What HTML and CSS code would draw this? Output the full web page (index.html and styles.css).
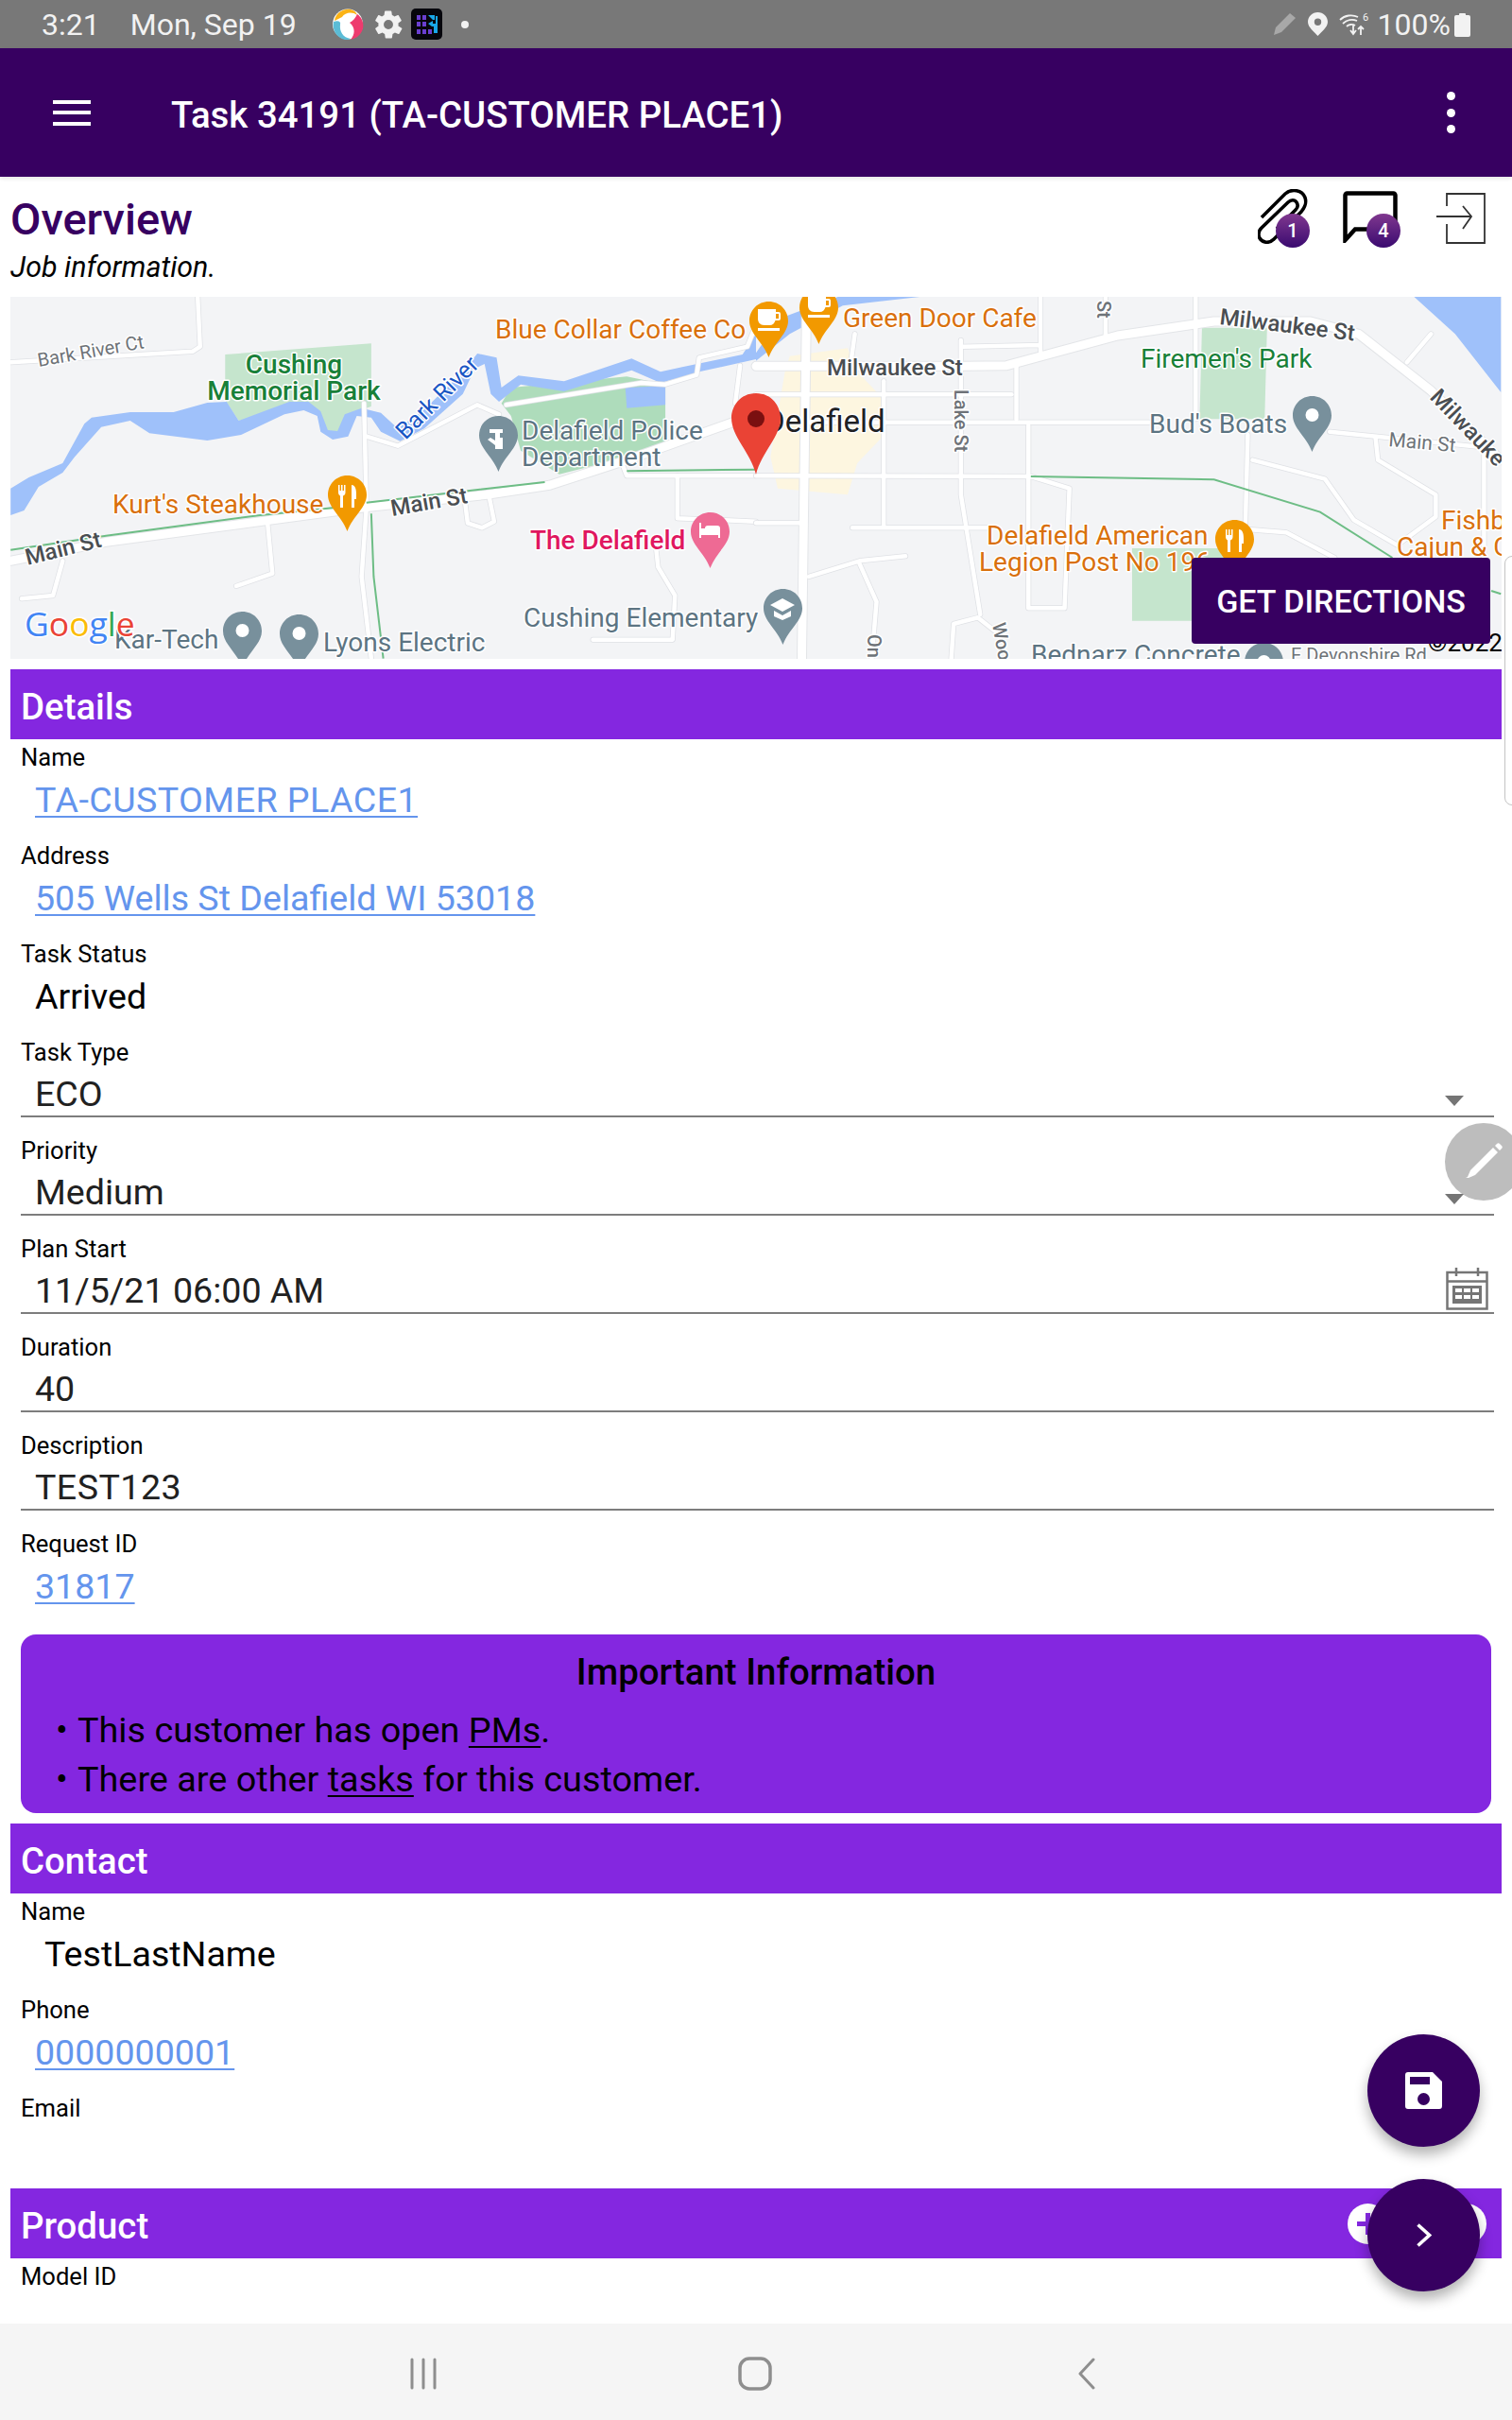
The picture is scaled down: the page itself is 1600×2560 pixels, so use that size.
FILE: index.html
```html
<!DOCTYPE html>
<html lang="en">
<head>
<meta charset="utf-8">
<title>Task 34191</title>
<link rel="stylesheet" href="styles.css">
</head>
<body>
<div class="screen">
  <div class="statusbar">
    <span class="st-time">3:21</span>
    <span class="st-date">Mon, Sep 19</span>
    <svg class="st-app1" viewBox="0 0 34 33"><circle cx="17" cy="16.500" r="16" fill="#fff"/><path d="M3 13C4 5 12 0 20 1C24 2 26 4 27 7C22 3 14 4 11 9Z" fill="#fbb316"/><path d="M27 6C33 10 35 18 32 24C29 30 24 32 20 33C25 27 25 20 19 15C23 13 25 10 27 6Z" fill="#ee3b6e"/><path d="M2 14C0 22 5 31 14 33C17 33 19 33 20 32C12 31 8 24 9 17C10 14 7 12 2 14Z" fill="#5bbcd6"/></svg>
    <svg class="st-gear" viewBox="0 0 24 24"><path fill="#f2f2f2" d="M19.400 13c.04-.330.06-.660.06-1s-.02-.670-.07-1l2.160-1.690c.19-.150.250-.420.120-.640l-2.050-3.550c-.120-.220-.390-.300-.620-.220l-2.550 1.030c-.530-.410-1.100-.750-1.730-1l-.390-2.710c-.03-.250-.250-.430-.500-.430h-4.100c-.250 0-.470.180-.500.430l-.390 2.710c-.620.250-1.200.600-1.730 1L4.990 4.900c-.230-.080-.500 0-.620.220L2.320 8.670c-.130.220-.070.490.120.640L4.600 11c-.040.330-.070.670-.070 1s.03.670.07 1l-2.160 1.690c-.19.150-.250.420-.120.640l2.050 3.550c.120.220.390.300.620.220l2.550-1.030c.530.410 1.100.750 1.730 1l.39 2.710c.03.250.250.430.500.430h4.100c.250 0 .470-.180.500-.430l.39-2.710c.620-.250 1.200-.600 1.730-1l2.550 1.030c.230.080.500 0 .620-.220l2.050-3.550c.130-.220.070-.490-.120-.640L19.400 13zM12 15.500a3.500 3.500 0 1 1 0-7 3.500 3.500 0 0 1 0 7z"/></svg>
    <svg class="st-app2" viewBox="0 0 33 33"><rect width="33" height="33" rx="5" fill="#06060c"/><g fill="#6a3fd0"><rect x="6" y="7" width="4" height="5"/><rect x="12" y="7" width="4" height="5"/><rect x="6" y="14" width="4" height="5"/><rect x="12" y="14" width="4" height="5"/><rect x="6" y="22" width="4" height="5"/><rect x="12" y="22" width="4" height="5"/><rect x="18" y="22" width="4" height="5"/></g><path d="M18 7h7v5h-2zM18 16l5-3v3h3v-8h2v18h-4v-7h-2z" fill="#19a7e8"/></svg>
    <span class="st-dot"></span>
    <span class="st-spacer"></span>
    <svg class="st-pen" viewBox="0 0 26 25"><path d="M1 24l2-8L18 1l6 5L9 21z" fill="#a8a8a8"/></svg>
    <svg class="st-loc" viewBox="0 0 21 25"><path fill-rule="evenodd" d="M10.500 0C4.700 0 0 4.500 0 10.300 0 16 7 21 10.500 25 14 21 21 16 21 10.300 21 4.500 16.300 0 10.500 0zm0 6.500a3.700 3.700 0 1 1 0 7.400 3.700 3.700 0 0 1 0-7.400z" fill="#f2f2f2"/></svg>
    <svg class="st-wifi" viewBox="0 0 32 25" fill="none" stroke="#f2f2f2" stroke-width="1.800"><path d="M1 8C6 3 14 2 20 5"/><path d="M4 12C8 8 14 7 19 9"/><path d="M8 15C10 13 14 12 17 14"/><path d="M15 14v8M12 19l3 4 3-4M23 24v-9M20 18l3-3 3 3"/><text class="st-six" x="25" y="9">6</text></svg>
    <span class="st-pct">100%</span>
    <svg class="st-batt" viewBox="0 0 17 26"><path d="M5 2a1 1 0 0 1 1-1h5a1 1 0 0 1 1 1v1h3a2 2 0 0 1 2 2v19a2 2 0 0 1-2 2H2a2 2 0 0 1-2-2V5a2 2 0 0 1 2-2h3z" fill="#f2f2f2"/></svg>
  </div>

  <header class="appbar">
    <div class="hamburger"><i></i><i></i><i></i></div>
    <h1 class="appbar-title">Task 34191 (TA-CUSTOMER PLACE1)</h1>
    <div class="kebab"><i></i><i></i><i></i></div>
  </header>

  <main class="content">
    <div class="overview">
      <div class="overview-text">
        <h2 class="overview-title">Overview</h2>
        <p class="overview-sub">Job information.</p>
      </div>
      <div class="overview-icons">
        <div class="ov-icon ov-clip">
          <svg viewBox="0 0 53 58" width="53" height="58" fill="none" stroke="#000" stroke-width="3.600"><path d="M4 30L29 5C36-1 47 1 50 9C52 15 50 19 46 24L17 53C12 58 5 57 2 52C0 48 1 44 4 41L32 14C35 11 39 11 41 14C43 17 42 20 40 22L20 42"/></svg>
          <span class="badge">1</span>
        </div>
        <div class="ov-icon ov-chat">
          <svg viewBox="0 0 58 55" width="58" height="55" fill="none" stroke="#000" stroke-width="4.500"><path d="M2.500 52V4.500a2 2 0 0 1 2-2h49a2 2 0 0 1 2 2v34a2 2 0 0 1-2 2H13z"/></svg>
          <span class="badge">4</span>
        </div>
        <div class="ov-icon ov-login">
          <svg viewBox="0 0 52 54" width="52" height="54" fill="none" stroke="#333" stroke-width="1.800"><path d="M11 14V1h40v52H11V33"/><path d="M0 25h36M28 14l9 11-9 13"/></svg>
        </div>
      </div>
    </div>

    <div class="map">
      <svg class="map-svg" viewBox="11 314 1578 383" width="1578" height="383">
        <defs>
          <symbol id="pin" viewBox="0 0 41 59"><path d="M20.500 0C9 0 0 9 0 20.500C0 34 14 42 20.500 59C27 42 41 34 41 20.500C41 9 32 0 20.500 0Z"/></symbol>
          <symbol id="pin-dot" viewBox="0 0 41 59"><path d="M20.500 0C9 0 0 9 0 20.500C0 34 14 42 20.500 59C27 42 41 34 41 20.500C41 9 32 0 20.500 0Z"/><circle cx="20.500" cy="20" r="7" fill="#fff"/></symbol>
          <symbol id="pin-food" viewBox="0 0 41 59"><path d="M20.500 0C9 0 0 9 0 20.500C0 34 14 42 20.500 59C27 42 41 34 41 20.500C41 9 32 0 20.500 0Z"/><path fill="#fff" d="M11 10h1.500v6h1.500v-6h1.500v6h1.500v-6h1.500v8c0 2-1 3-2.500 3.500V34h-3V21.500C12 21 11 20 11 18zM25 10c3 0 5 3 5 9v6h-2v9h-3z"/></symbol>
          <symbol id="pin-cup" viewBox="0 0 41 59"><path d="M20.500 0C9 0 0 9 0 20.500C0 34 14 42 20.500 59C27 42 41 34 41 20.500C41 9 32 0 20.500 0Z"/><path fill="#fff" d="M9 8h19v3h3a2 2 0 0 1 2 2v5a2 2 0 0 1-2 2h-3.500c-1 3-3 5-6 5h-6c-4 0-6.500-3-6.500-7zM28 13v5h3v-5zM9 28h23v3H9z"/></symbol>
          <g id="roads-left" class="rp">
            <path d="M22 220L400 185L415 170L410 12"/>
            <path d="M1050 355L1330 285L1380 290L1445 260L1450 205L1550 170L1568 100"/>
            <path d="M760 455L825 485L990 355L1035 385"/>
            <path d="M755 350L760 680L750 900L770 1160"/>
            <path d="M130 850L110 960L45 970"/>
            <path d="M555 730L565 890L490 930"/>
            <path d="M965 670L970 730L1000 745L1025 725L1015 650"/>
            <path d="M1290 540L1300 580L1568 580"/>
            <path d="M1405 580L1405 715L1568 725"/>
            <path d="M1360 800L1365 870L1400 960L1395 1100L1230 1100"/>
            <path d="M1535 230L1525 350"/>
          </g>
          <g id="roads-right" class="rp">
            <path d="M0 410H815M1190 440L1510 490"/>
            <path d="M0 322H530"/>
            <path d="M0 580L570 582L650 620L640 1000L565 1000L565 420"/>
            <path d="M0 730H90"/>
            <path d="M200 745L480 745M1020 750L1100 760L1200 840"/>
            <path d="M265 280V740"/>
            <path d="M425 150V640L465 1020"/>
            <path d="M540 235V400"/>
            <path d="M1020 450L1015 740"/>
            <path d="M1030 530L1180 590L1240 720L1330 800L1410 710L1410 640L1290 530L1285 460"/>
            <path d="M912 12V400M725 12V140M590 12V185M430 170L590 165M1510 490V840"/>
            <path d="M110 900L215 850L310 835M215 860L250 980L240 1160"/>
            <path d="M405 1160L410 1050L460 1030L510 1090"/>
            <path d="M1350 220L1400 130M205 130L195 240"/>
          </g>
          <g id="major-left" class="rp"><path d="M22 850L220 790L540 725L760 680L1010 640L1140 610L1300 530L1520 410"/></g>
          <g id="major-right" class="rp"><path d="M0 232H430L520 230L750 135L950 90L1150 90L1250 130L1400 310L1545 530"/><path d="M105 12L95 1160"/></g>
        </defs>
        <rect class="map-bg" x="11" y="314" width="1578" height="383"/>

        <g transform="translate(0 310) scale(.5102 .3333)">
          <path class="park" d="M467 195L770 160V360L740 375L715 440L690 460L665 430L660 385L630 370L560 390L495 405L467 340Z"/>
          <path class="park-dark" d="M1040 350L1060 300L1300 265L1380 290V490L1160 575L1080 500L1060 390Z"/>
          <path class="water" d="M22 620L60 585L130 540L175 415L190 395L270 378L360 378L430 348L470 345L495 405L600 345L640 345L665 375L680 435L700 438L715 385L750 365L790 380L825 430L880 370L960 250L990 192L1030 205L1040 300L1075 262L1170 280L1310 208L1370 250L1415 235L1540 195L1568 130V210L1450 250L1420 265L1370 285L1310 245L1170 312L1080 290L1035 345L1018 320L1005 225L985 240L960 320L880 430L830 470L790 440L770 395L740 390L722 455L690 465L665 440L658 390L630 372L590 385L500 450L430 468L310 445L270 405L210 425L155 520L130 570L80 615L50 690L22 705Z"/>
          <path class="water" d="M1297 300L1380 295V355L1300 365Z"/>
          <use href="#roads-left" class="road-case"/><use href="#major-left" class="major-case"/>
          <use href="#roads-left" class="road"/><use href="#major-left" class="major"/>
          <path class="trail" d="M22 815L220 770L540 705L700 680M760 665L1130 600M770 700L775 900L795 1160M1300 565L1568 560"/>
        </g>
        <g transform="translate(800 310) scale(.5102 .3333)">
          <path class="cream" d="M60 250L70 200L190 175L210 250L260 330V460L210 540L190 640L45 620L30 520Z"/>
          <path class="park" d="M925 110H1060L1055 400H920Z"/>
          <path class="park" d="M780 810H1000V1040H780Z"/>
          <path class="water" d="M1365 12H1545V315L1450 130Z"/>
          <path class="water" d="M0 190L50 80L170 12H340L180 40L70 130L0 215Z"/>
          <use href="#roads-right" class="road-case"/><use href="#major-right" class="major-case"/>
          <use href="#roads-right" class="road"/><use href="#major-right" class="major"/>
          <path class="trail" d="M570 582L950 592L1170 695L1320 840M1525 945L1545 955"/>
        </g>

        <text class="t t-gray t20" x="41" y="388" transform="rotate(-10 41 388)">Bark River Ct</text>
        <text class="t t-orange t28" x="524" y="358">Blue Collar Coffee Co</text>
        <text class="t t-green t28 tm tc" x="311" y="395">Cushing</text>
        <text class="t t-green t28 tm tc" x="311" y="423">Memorial Park</text>
        <text class="t t-blue t25" x="429" y="466" transform="rotate(-45 429 466)">Bark River</text>
        <text class="t t-slate t28" x="552" y="465">Delafield Police</text>
        <text class="t t-slate t28" x="552" y="493">Department</text>
        <text class="t t-orange t28" x="119" y="543">Kurt's Steakhouse</text>
        <text class="t t-road t24 tm" x="29" y="598" transform="rotate(-14 29 598)">Main St</text>
        <text class="t t-road t24 tm" x="415" y="546" transform="rotate(-10 415 546)">Main St</text>
        <text class="t t-pink t28 tm" x="561" y="581">The Delafield</text>
        <text class="t t-slate t28" x="554" y="663">Cushing Elementary</text>
        <text class="t t-slate t28" x="121" y="686">Kar-Tech</text>
        <text class="t t-slate t28" x="342" y="689">Lyons Electric</text>
        <text class="t t-orange t28" x="892" y="346">Green Door Cafe</text>
        <text class="t t-road t24 tm" x="875" y="397">Milwaukee St</text>
        <text class="t t-road t24 tm" x="1290" y="343" transform="rotate(7 1290 343)">Milwaukee St</text>
        <text class="t t-dark t33" x="809" y="457">Delafield</text>
        <text class="t t-gray t20 tm" x="1010" y="412" transform="rotate(90 1010 412)">Lake St</text>
        <text class="t t-gray t20 tm" x="1161" y="318" transform="rotate(90 1161 318)">St</text>
        <text class="t t-road t24 tm" x="1512" y="421" transform="rotate(46 1512 421)">Milwauke</text>
        <text class="t t-green t28" x="1207" y="389">Firemen's Park</text>
        <text class="t t-slate t28" x="1216" y="458">Bud's Boats</text>
        <text class="t t-gray t21" x="1469" y="472" transform="rotate(5 1469 472)">Main St</text>
        <text class="t t-orange t28" x="1525" y="560">Fishb</text>
        <text class="t t-orange t28" x="1478" y="588">Cajun &amp; C</text>
        <text class="t t-orange t28" x="1044" y="576">Delafield American</text>
        <text class="t t-orange t28" x="1036" y="604">Legion Post No 196</text>
        <text class="t t-gray t20 tm" x="918" y="671" transform="rotate(90 918 671)">On</text>
        <text class="t t-gray t20 tm" x="1050" y="660" transform="rotate(80 1050 660)">Woo</text>
        <text class="t t-slate t28" x="1091" y="702">Bednarz Concrete</text>
        <text class="t t-gray t20" x="1366" y="700">E Devonshire Rd</text>
        <text class="t t-black t26" x="1511" y="689">©2022</text>

        <use href="#pin-food" class="p-orange" x="347" y="503" width="41" height="59"/>
        <use href="#pin-food" class="p-orange" x="1286" y="550" width="41" height="59"/>
        <use href="#pin-cup" class="p-orange" x="793" y="319" width="41" height="59"/>
        <use href="#pin-cup" class="p-orange" x="846" y="305" width="41" height="59"/>
        <use href="#pin-dot" class="p-gray" x="236" y="647" width="41" height="59"/>
        <use href="#pin-dot" class="p-gray" x="296" y="650" width="41" height="59"/>
        <use href="#pin-dot" class="p-gray" x="1368" y="419" width="41" height="59"/>
        <use href="#pin-dot" class="p-gray" x="1317" y="680" width="41" height="59"/>
        <use href="#pin" class="p-gray" x="507" y="440" width="41" height="59"/>
        <path class="glyph" d="M518 454h14v4h-3v5h3v12h-8v-4l-8-6 3-2 5 3v-8h-6z"/>
        <use href="#pin" class="p-gray" x="808" y="623" width="41" height="59"/>
        <path class="glyph" d="M828 633l13 7-13 7-13-7zM819 646l9 5 9-5v6l-9 4-9-4z"/>
        <use href="#pin" class="p-pink" x="731" y="542" width="41" height="59"/>
        <path class="glyph" d="M740 553h2v6h4a3 3 0 0 1 3-3h10a3 3 0 0 1 3 3v10h-2v-3h-18v3h-2z"/>
        <g class="google">
          <text x="26" y="673"><tspan class="g-b">G</tspan><tspan class="g-r">o</tspan><tspan class="g-y">o</tspan><tspan class="g-b">g</tspan><tspan class="g-g">l</tspan><tspan class="g-r">e</tspan></text>
        </g>
        <path class="marker" d="M800 416C783 416 774 430 774 442C774 462 794 478 800 502C806 478 826 462 826 442C826 430 817 416 800 416Z"/>
        <circle class="marker-dot" cx="800" cy="443" r="9"/>
      </svg>
      <button class="directions">GET DIRECTIONS</button>
    </div>

    <section class="section-head"><h3>Details</h3></section>
    <div class="field"><div class="f-label">Name</div><div class="f-value"><a class="link wide">TA-CUSTOMER PLACE1</a></div></div>
    <div class="field"><div class="f-label">Address</div><div class="f-value"><a class="link">505 Wells St Delafield WI 53018</a></div></div>
    <div class="field"><div class="f-label">Task Status</div><div class="f-value">Arrived</div></div>
    <div class="field"><div class="f-label">Task Type</div><div class="f-value lined"><span>ECO</span><i class="arrow"></i></div></div>
    <div class="field"><div class="f-label">Priority</div><div class="f-value lined"><span>Medium</span><i class="arrow"></i></div></div>
    <div class="field"><div class="f-label">Plan Start</div><div class="f-value lined"><span>11/5/21 06:00 AM</span>
      <svg class="calendar" viewBox="0 0 45 45" width="45" height="45" fill="none" stroke="#757575" stroke-width="2.500"><rect x="1.500" y="5" width="42" height="38.500"/><path d="M1.500 14.500h42M11 0v9M34 0v9"/><path fill="#757575" stroke="none" d="M7 19h31v19H7z"/><path fill="#fff" stroke="none" d="M10 22h7v4h-7zM19 22h7v4h-7zM28 22h7v4h-7zM10 29h7v4h-7zM19 29h7v4h-7zM28 29h7v4h-7z"/></svg></div></div>
    <div class="field"><div class="f-label">Duration</div><div class="f-value lined"><span>40</span></div></div>
    <div class="field"><div class="f-label">Description</div><div class="f-value lined"><span class="wide">TEST123</span></div></div>
    <div class="field"><div class="f-label">Request ID</div><div class="f-value"><a class="link">31817</a></div></div>

    <div class="important">
      <h4>Important Information</h4>
      <p><span class="bullet">•</span>This customer has open <u>PMs</u>.</p>
      <p><span class="bullet">•</span>There are other <u>tasks</u> for this customer.</p>
    </div>

    <section class="section-head"><h3>Contact</h3></section>
    <div class="field"><div class="f-label">Name</div><div class="f-value f-indent">TestLastName</div></div>
    <div class="field"><div class="f-label">Phone</div><div class="f-value"><a class="link">0000000001</a></div></div>
    <div class="field"><div class="f-label">Email</div><div class="f-value"></div></div>

    <section class="section-head"><h3>Product</h3>
      <div class="head-actions">
        <svg viewBox="0 0 43 43" width="43" height="43"><circle cx="21.500" cy="21.500" r="21.500" fill="#fff"/><path d="M10 19h23v5H10zM19 10h5v23h-5z" fill="#8427e0"/></svg>
        <svg viewBox="0 0 43 43" width="43" height="43"><circle cx="21.500" cy="21.500" r="21.500" fill="#fff"/></svg>
      </div>
    </section>
    <div class="field"><div class="f-label">Model ID</div><div class="f-value"></div></div>
  </main>

  <nav class="navbar">
    <svg class="nav-recents" viewBox="0 0 30 34" fill="none" stroke="#8e8e8e" stroke-width="3" stroke-linecap="round"><path d="M3 2v30M15 2v30M27 2v30"/></svg>
    <svg class="nav-home" viewBox="0 0 36 36" fill="none" stroke="#8e8e8e" stroke-width="3.500"><rect x="2" y="2" width="32" height="32" rx="10"/></svg>
    <svg class="nav-back" viewBox="0 0 20 34" fill="none" stroke="#8e8e8e" stroke-width="3" stroke-linecap="round" stroke-linejoin="round"><path d="M17 2L3 17l14 15"/></svg>
  </nav>

  <div class="scroll-thumb"></div>
  <div class="fab-edit"><svg viewBox="0 0 40 40" width="40" height="40"><path fill="#fff" d="M1 37l2-1 3-7L30 5l5 5-24 24-7 3zM32 3l2-2c1-1 2-1 3 0l2 2c1 1 1 2 0 3l-2 2z"/></svg></div>
  <button class="fab fab-save"><svg viewBox="0 0 39 39" width="39" height="39"><path fill="#fff" fill-rule="evenodd" d="M3 0h26l10 10v26a3 3 0 0 1-3 3H3a3 3 0 0 1-3-3V3a3 3 0 0 1 3-3zm2 5v8h21V5zm14.500 17a6.500 6.500 0 1 0 0 13 6.500 6.500 0 0 0 0-13z"/></svg></button>
  <button class="fab fab-next"><svg viewBox="0 0 16 25" width="16" height="25" fill="none" stroke="#fff" stroke-width="3.600"><path d="M1.500 1.500L13.500 12.500L1.500 23.500"/></svg></button>
</div>
</body>
</html>
```

FILE: styles.css
```css
* { box-sizing: border-box; }
html, body { margin: 0; padding: 0; background: #fff; }
body { font-family: Roboto, "Liberation Sans", sans-serif; color: #000; }
h1, h2, h3, h4, p { margin: 0; font-weight: 400; }

.screen { position: relative; width: 1600px; height: 2560px; overflow: hidden; display: flex; flex-direction: column; background: #fff; }

/* status bar */
.statusbar { flex: 0 0 51px; height: 51px; background: #787878; display: flex; align-items: center; padding-left: 44px; color: #f2f2f2; font-size: 32px; }
.st-date { margin-left: 32px; }
.st-app1 { width: 34px; height: 33px; margin-left: 37px; }
.st-gear { width: 34px; height: 34px; margin-left: 9px; }
.st-app2 { width: 33px; height: 33px; margin-left: 7px; }
.st-dot { width: 8px; height: 8px; border-radius: 50%; background: #f2f2f2; margin-left: 20px; }
.st-spacer { flex: 1; }
.st-pen { width: 26px; height: 25px; }
.st-loc { width: 21px; height: 25px; margin-left: 11px; }
.st-wifi { width: 32px; height: 25px; margin-left: 12px; }
.st-six { font-size: 11px; fill: #f2f2f2; stroke: none; }
.st-pct { margin-left: 9px; }
.st-batt { width: 17px; height: 26px; margin-left: 4px; margin-right: 44px; }

/* app bar */
.appbar { flex: 0 0 136px; height: 136px; background: #370061; display: flex; align-items: center; color: #fff; box-shadow: 0 2px 4px rgba(0,0,0,.1); position: relative; z-index: 1; }
.hamburger { width: 40px; height: 27px; margin-left: 56px; display: flex; flex-direction: column; justify-content: space-between; }
.hamburger i { display: block; height: 4px; background: #fff; }
.appbar-title { margin-left: 85px; padding-top: 4px; font-size: 38.400px; font-weight: 500; flex: 1; white-space: nowrap; }
.kebab { width: 10px; height: 44px; margin-right: 59px; display: flex; flex-direction: column; justify-content: space-between; }
.kebab i { display: block; width: 9px; height: 9px; border-radius: 50%; background: #fff; }

/* main */
.content { flex: 1; min-height: 0; overflow: hidden; padding: 0 11px; }
.overview { height: 127px; display: flex; justify-content: space-between; position: relative; }
.overview-title { font-size: 47px; font-weight: 500; color: #370061; line-height: 56px; margin-top: 17px; }
.overview-sub { font-size: 30.400px; font-style: italic; line-height: 36px; margin-top: 5px; }
.overview-icons { display: flex; align-items: flex-start; padding-right: 17px; }
.ov-icon { position: relative; }
.ov-clip { margin-top: 13px; }
.ov-chat { margin-top: 15px; margin-left: 37px; }
.ov-login { margin-top: 17px; margin-left: 41px; }
.badge { position: absolute; width: 36px; height: 36px; border-radius: 50%; background: linear-gradient(#80388f, #3a0a70); color: #fff; font-size: 20px; font-weight: 500; display: flex; align-items: center; justify-content: center; }
.ov-clip .badge { left: 19px; top: 26px; }
.ov-chat .badge { left: 25px; top: 24px; }

/* map */
.map { position: relative; height: 383px; margin-bottom: 11px; }
.map-svg { display: block; overflow: hidden; }
.map-bg { fill: #f3f4f6; }
.park { fill: #c5e5cd; }
.park-dark { fill: #aedcbb; }
.cream { fill: #fdf6e0; }
.water { fill: #9fc1fa; }
.road, .road-case, .major, .major-case { fill: none; stroke-linejoin: round; stroke-linecap: round; }
.rp path { vector-effect: non-scaling-stroke; }
.road { stroke: #fff; stroke-width: 4.500; }
.road-case { stroke: #dfe1e5; stroke-width: 6; }
.major { stroke: #fff; stroke-width: 9; }
.major-case { stroke: #e3e5e8; stroke-width: 11; }
.trail { fill: none; stroke: #6dbd85; stroke-width: 2; vector-effect: non-scaling-stroke; }
.t { font-family: Roboto, sans-serif; paint-order: stroke; stroke: #fff; stroke-width: 3px; stroke-linejoin: round; }
.t20 { font-size: 20px; }
.t21 { font-size: 21px; }
.t24 { font-size: 24px; }
.t25 { font-size: 25px; }
.t26 { font-size: 26px; }
.t28 { font-size: 28px; }
.t33 { font-size: 33px; }
.tm { font-weight: 500; }
.tc { text-anchor: middle; }
.t-gray { fill: #6e7378; }
.t-road { fill: #4a4e52; }
.t-orange { fill: #d9700c; }
.t-green { fill: #188038; }
.t-blue { fill: #1a56c4; }
.t-slate { fill: #5c7482; }
.t-pink { fill: #e0175f; }
.t-dark { fill: #202124; }
.t-black { fill: #000; stroke: none; }
.p-orange { fill: #f29900; }
.p-gray { fill: #78909c; }
.p-pink { fill: #ee6a94; }
.glyph { fill: #fff; }
.marker { fill: #ea4335; }
.marker-dot { fill: #7a1010; }
.google { font-family: "Open Sans", sans-serif; font-size: 35.500px; paint-order: stroke; stroke: #fff; stroke-width: 3px; }
.g-b { fill: #4285f4; }
.g-r { fill: #ea4335; }
.g-y { fill: #fbbc05; }
.g-g { fill: #34a853; }
.directions { position: absolute; left: 1250px; top: 276px; width: 316px; height: 91px; border: 0; border-radius: 4px; background: #370061; color: #fff; font-family: Roboto, sans-serif; font-size: 34px; font-weight: 500; padding: 0; }

/* sections */
.section-head { height: 74px; background: #8427e0; display: flex; align-items: center; justify-content: space-between; padding: 0 16px 0 11px; }
.section-head h3 { color: #fff; font-size: 38.400px; font-weight: 500; padding-top: 4px; }
.head-actions { display: flex; gap: 61px; }

/* fields */
.field { height: 88px; margin-bottom: 16px; padding: 0 8px 0 11px; }
.f-label { height: 40px; line-height: 38px; font-size: 25.600px; }
.f-value { height: 48px; line-height: 46px; font-size: 37.600px; padding-left: 15px; display: flex; justify-content: space-between; align-items: center; white-space: nowrap; }
.f-indent { padding-left: 25px; }
.lined { border-bottom: 2px solid #7d7d7d; color: #212121; }
.link { color: #6495ed; text-decoration: underline; text-decoration-thickness: 2px; text-underline-offset: 4px; }
.wide { letter-spacing: .45px; }
.arrow { position: relative; z-index: 3; align-self: flex-end; margin: 0 32px 10px 0; width: 0; height: 0; border-left: 10.500px solid transparent; border-right: 10.500px solid transparent; border-top: 11px solid #757575; }
.calendar { align-self: flex-end; margin: 0 6px 2px 0; }

/* important */
.important { margin: 27px 0 11px 11px; width: 1556px; height: 189px; border-radius: 16px; background: #8427e0; padding: 17px 0 0 37px; }
.important h4 { font-size: 38.400px; font-weight: 500; text-align: center; line-height: 46px; padding-right: 37px; margin-bottom: 12px; }
.important p { font-size: 37.800px; line-height: 52px; }
.important u { text-decoration-thickness: 2px; text-underline-offset: 4px; }
.bullet { display: inline-block; width: 23px; }

/* nav */
.navbar { flex: 0 0 102px; height: 102px; background: #f5f5f5; display: flex; align-items: center; padding-top: 4px; }
.nav-recents { width: 30px; height: 34px; margin-left: 433px; }
.nav-home { width: 36px; height: 36px; margin-left: 318px; }
.nav-back { width: 20px; height: 34px; margin-left: 323px; }

/* overlays */
.scroll-thumb { position: absolute; left: 1592px; top: 588px; width: 20px; height: 264px; border: 1px solid #c4c4c4; border-radius: 8px; }
.fab-edit { position: absolute; left: 1529px; top: 1188px; width: 82px; height: 82px; border-radius: 50%; background: #bdbdbd; display: flex; align-items: center; justify-content: center; z-index: 2; }
.fab { position: absolute; left: 1447px; width: 119px; height: 119px; border-radius: 50%; border: 0; padding: 0; background: #370061; display: flex; align-items: center; justify-content: center; box-shadow: 0 8px 14px rgba(0,0,0,.3); z-index: 4; }
.fab-save { top: 2152px; }
.fab-next { top: 2305px; }
```
